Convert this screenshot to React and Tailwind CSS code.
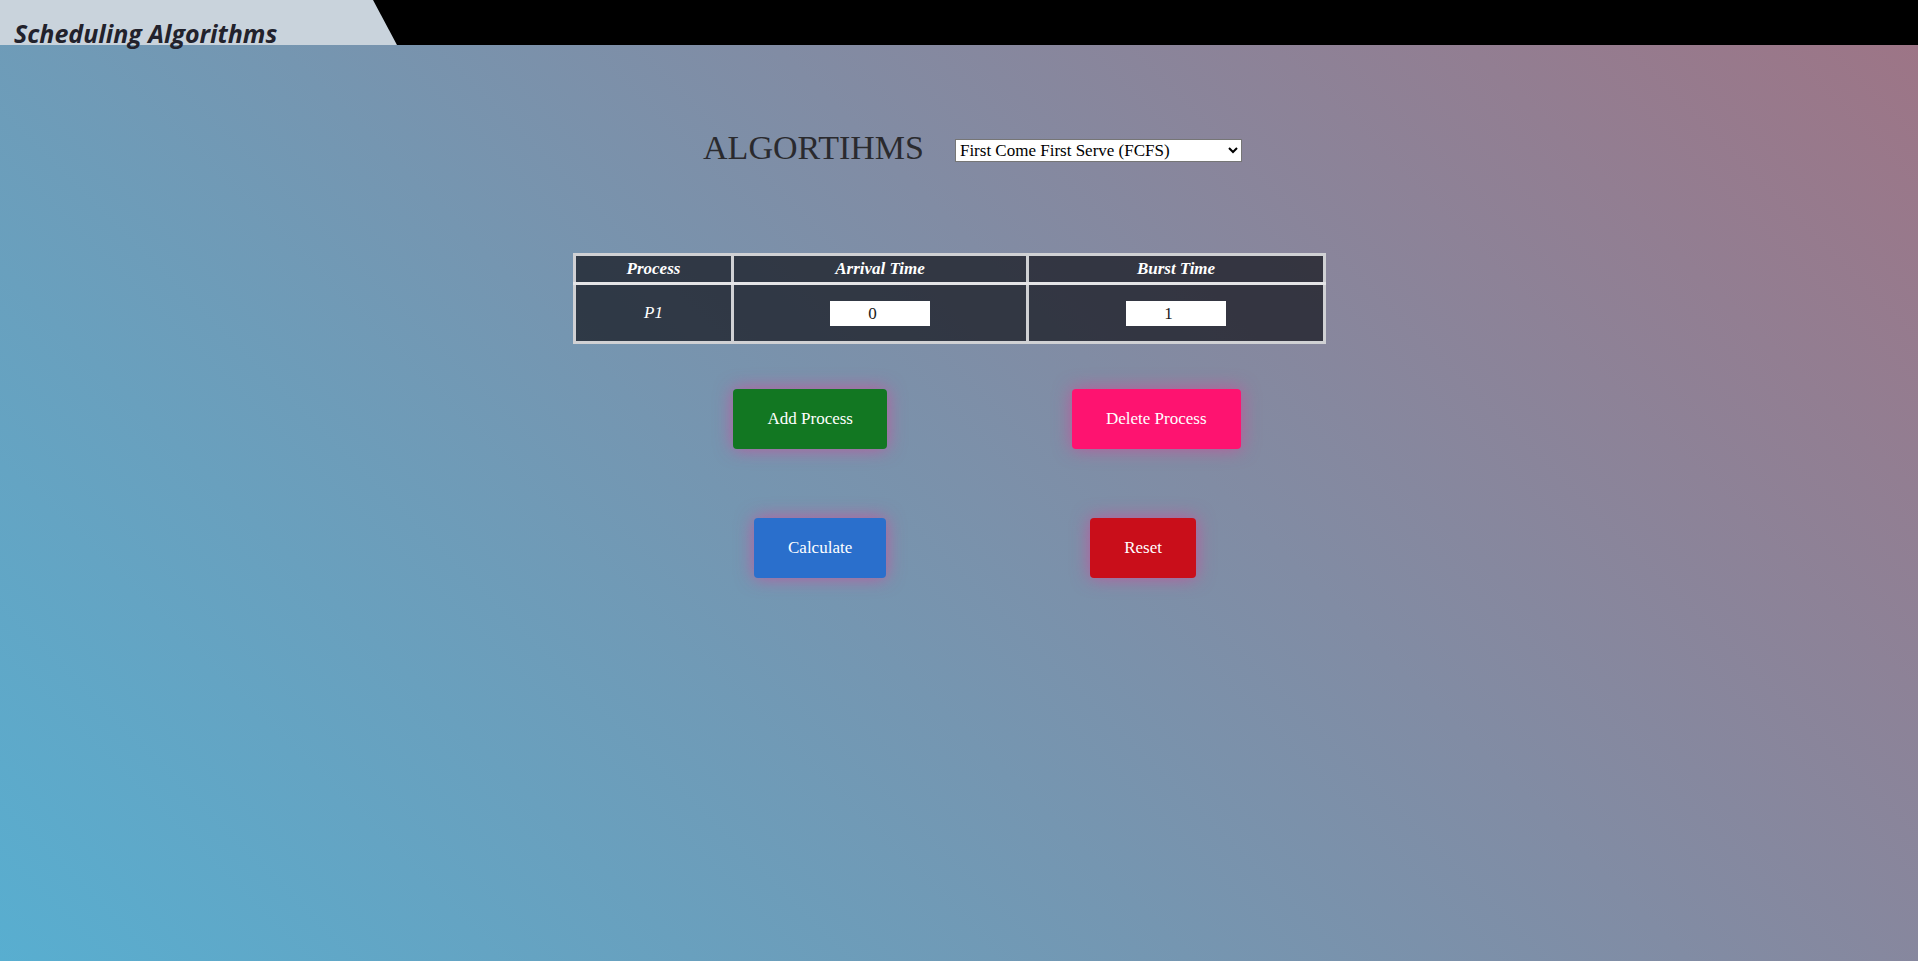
import React from "react";

export default function App() {
  return (
    <div className="min-h-[961px] w-full bg-[linear-gradient(45deg,#58aed0,#9e7485)] font-['Liberation_Serif','Times_New_Roman',serif] text-[17px]">
      <header className="relative h-[45px] bg-black">
        <div className="absolute inset-y-0 left-0 w-[397px] bg-[#c9d3dc] [clip-path:polygon(0_0,373px_0,100%_100%,0_100%)]" />
        <h1 className="relative pl-[14px] pt-[21px] font-['Open_Sans',sans-serif] text-[25px] font-bold italic leading-[25px] text-[#22222c]">
          Scheduling Algorithms
        </h1>
      </header>

      <div className="ml-[27px] mt-[83px] flex items-start justify-center gap-[31px]">
        <h2 className="text-[34px] leading-[39px] text-[#2a2a2e]">ALGORTIHMS</h2>
        <select className="mt-[11px] h-[23px] w-[287px] border border-[#767676] bg-white text-[17px] leading-[19px] text-black">
          <option>First Come First Serve (FCFS)</option>
          <option>Shortest Job First (SJF)</option>
          <option>Round Robin (RR)</option>
        </select>
      </div>

      <div className="mt-[86px] flex justify-center pr-[19px]">
        <table className="w-[750px] table-fixed border-collapse border-[3px] border-[#d0d1d4] bg-[rgba(17,18,25,0.7)] text-white">
          <colgroup>
            <col className="w-[158px]" />
            <col className="w-[295px]" />
            <col className="w-[297px]" />
          </colgroup>
          <thead>
            <tr className="h-[28px]">
              <th className="border-[3px] border-b-[#e4e4e6] border-[#d0d1d4] font-bold italic">Process</th>
              <th className="border-[3px] border-b-[#e4e4e6] border-[#d0d1d4] font-bold italic">Arrival Time</th>
              <th className="border-[3px] border-b-[#e4e4e6] border-[#d0d1d4] font-bold italic">Burst Time</th>
            </tr>
          </thead>
          <tbody>
            <tr className="h-[59px]">
              <td className="border-[3px] border-[#d0d1d4] text-center italic">P1</td>
              <td className="border-[3px] border-[#d0d1d4] text-center">
                <input
                  type="number"
                  defaultValue="0"
                  className="h-[25px] w-[100px] bg-white text-center text-[17px] text-[#1a1a1a] align-middle"
                />
              </td>
              <td className="border-[3px] border-[#d0d1d4] text-center">
                <input
                  type="number"
                  defaultValue="1"
                  className="h-[25px] w-[100px] bg-white text-center text-[17px] text-[#1a1a1a] align-middle"
                />
              </td>
            </tr>
          </tbody>
        </table>
      </div>

      <div className="ml-[56px] mt-[45px] flex justify-center gap-[185px]">
        <button className="h-[60px] rounded-[4px] bg-[#127722] px-[34px] text-white shadow-[0_0_18px_rgba(225,60,150,0.65)]">
          Add Process
        </button>
        <button className="h-[60px] rounded-[4px] bg-[#fe1370] px-[34px] text-white shadow-[0_0_18px_rgba(225,60,150,0.65)]">
          Delete Process
        </button>
      </div>

      <div className="ml-[32px] mt-[69px] flex justify-center gap-[204px]">
        <button className="h-[60px] rounded-[4px] bg-[#2a6fcc] px-[34px] text-white shadow-[0_0_18px_rgba(225,60,150,0.65)]">
          Calculate
        </button>
        <button className="h-[60px] rounded-[4px] bg-[#c90e1a] px-[34px] text-white shadow-[0_0_18px_rgba(225,60,150,0.65)]">
          Reset
        </button>
      </div>
    </div>
  );
}
